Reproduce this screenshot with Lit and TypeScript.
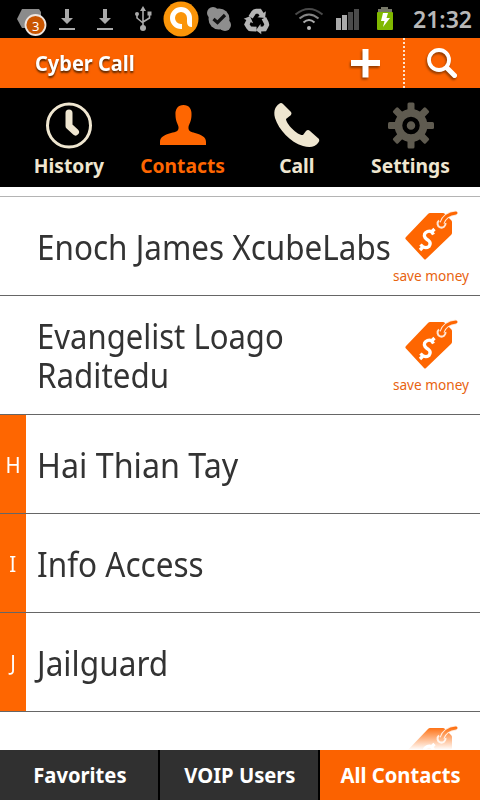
import { LitElement, html, css, svg, nothing } from "lit";
import { customElement } from "lit/decorators.js";
import { classMap } from "lit/directives/class-map.js";
import { styleMap } from "lit/directives/style-map.js";

interface Line {
  text: string;
  stretch: number;
}

interface Row {
  lines: Line[];
  letter?: string;
  save?: boolean;
}

const rows: Row[] = [
  { lines: [{ text: "Enoch James XcubeLabs", stretch: 0.925 }], save: true },
  {
    lines: [
      { text: "Evangelist Loago", stretch: 0.913 },
      { text: "Raditedu", stretch: 0.922 },
    ],
    save: true,
  },
  { lines: [{ text: "Hai Thian Tay", stretch: 0.949 }], letter: "H" },
  { lines: [{ text: "Info Access", stretch: 0.927 }], letter: "I" },
  { lines: [{ text: "Jailguard", stretch: 0.93 }], letter: "J" },
];

const tag = html`<svg width="56" height="52" viewBox="0 0 56 52">
  <path d="M27 4H40Q41 4 42 5L48 11Q49 12 49 13V24Q49 25 48 26L23 50Q22 51 21 50L2.500 30Q2 29 3 28L25 5Q26 4 27 4Z" fill="#fe6601" />
  <path d="M36 11.500A4 4 0 1 0 42.500 14" fill="none" stroke="#ffe6d4" stroke-width="2" />
  <path d="M39 14Q42 5 53 4" fill="none" stroke="#ffe6d4" stroke-width="5" />
  <path d="M39 14Q42 5 53 4" fill="none" stroke="#fe6601" stroke-width="3" stroke-linecap="round" />
  <path d="M30.500 25.500Q28 21 24.500 22.500Q20 24.500 22 28.500Q23 30 25.500 31.500Q28.500 34 26 37.500Q22 40.500 17.500 35.500M28 23.500L31.500 20M20 38L17 41" fill="none" stroke="#fff" stroke-width="3.300" />
</svg>`;

const teeth = [0, 45, 90, 135, 180, 225, 270, 315];

const icons = {
  history: html`<svg width="50" height="50" viewBox="0 0 50 50">
    <circle cx="25" cy="25.500" r="21.500" fill="none" stroke="#efe6d0" stroke-width="3" />
    <path d="M25 13V26L31.500 32" fill="none" stroke="#efe6d0" stroke-width="7" stroke-linecap="round" stroke-linejoin="round" />
  </svg>`,
  contacts: html`<svg width="50" height="50" viewBox="0 0 50 50">
    <path d="M25.500 5C31 5 34 9 33.500 15C33.500 21 31 24 30.500 27C30 31 33 32 37 33C44 35 48 37 48 42V45H2V42C2 37 6 35 13 33C18 32 21 31 20.500 27C20 24 17.500 21 17.500 15C17 9 20 5 25.500 5Z" fill="#fe6601" />
  </svg>`,
  call: html`<svg width="50" height="50" viewBox="0 0 50 50">
    <path d="M7 4Q9 2 11 4L19 12Q20 13 19 15L14 19C14 24 26 36 31 35L34 31Q36 29 38 31L47 39Q48 41 46 43C43 47 38 48 31 46C18 42 7 30 3 18C1 10 4 6 7 4Z" fill="#efe6d0" />
  </svg>`,
  settings: html`<svg width="50" height="50" viewBox="0 0 50 50">
    ${teeth.map((a) => svg`<rect x="21.500" y="2.500" width="7" height="12" rx="1.500" fill="#5f5b50" transform="rotate(${a} 25 25.500)" />`)}
    <circle cx="25" cy="25.500" r="16.500" fill="#5f5b50" />
    <circle cx="25" cy="25.500" r="6.500" fill="#5f5b50" stroke="#000" stroke-width="4.500" />
  </svg>`,
};

const recycleArms = [0, 120, 240];

const statusBar = html`<svg width="480" height="38" viewBox="0 0 480 38">
  <path d="M22 9H39L41 12V28H22L17 19Z" fill="#8b8b8b" />
  <circle cx="35.500" cy="25" r="10" fill="#c95500" stroke="#eee5df" stroke-width="1.800" />
  <text x="35.700" y="30.500" class="badge">3</text>
  <g fill="#aaa">
    <path d="M65 9H69V18H73L67 24L61 18H65ZM59 28H75V30H59Z" />
    <path d="M103 9H107V18H111L105 24L99 18H103ZM97 28H113V30H97Z" />
    <circle cx="143" cy="28" r="3" />
    <path d="M143 6L146 11H140Z" />
    <circle cx="137" cy="14" r="2" />
    <rect x="147.500" y="11.500" width="4" height="4" />
  </g>
  <path d="M143 10V27M137 14V18L143 23M149.500 14V18L143 22" fill="none" stroke="#aaa" stroke-width="1.600" />
  <circle cx="181" cy="19" r="17.500" fill="#fb9509" />
  <path d="M182 26.500H181A8.500 8.500 0 1 1 189.500 18V22Q189.500 24.500 192 24.500" fill="none" stroke="#fff" stroke-width="5" />
  <circle cx="219" cy="19" r="10.500" fill="#8e8e8e" />
  <circle cx="213" cy="13" r="6" fill="#8e8e8e" />
  <circle cx="225" cy="25" r="6" fill="#8e8e8e" />
  <path d="M213.500 19L217.500 22.500L225 15" fill="none" stroke="#111" stroke-width="3.200" />
  <g transform="translate(257 21.500) scale(0.85) translate(-257 -21.500)">
    ${recycleArms.map(
      (a) => svg`<g transform="rotate(${a} 257 21.500)">
        <path d="M249.500 16.500L253 11Q254 9.500 256 9.500H260L263 14" fill="none" stroke="#b5b5b5" stroke-width="5.800" />
        <path d="M257.500 16.500L266.500 17.500L267.500 9.500Z" fill="#b5b5b5" />
      </g>`
    )}
  </g>
  <g fill="none" stroke-width="2">
    <path d="M295.500 14.500Q309 3.500 322.500 14.500" stroke="#4a4a4a" />
    <path d="M299.500 18.500Q309 10.500 318.500 18.500" stroke="#858585" />
    <path d="M303.500 22.500Q309 17.500 314.500 22.500" stroke="#aaa" />
  </g>
  <circle cx="309" cy="28" r="2" fill="#bbb" />
  <rect x="336" y="18" width="5" height="12" fill="#aaa" />
  <rect x="342" y="15" width="5" height="15" fill="#aaa" />
  <rect x="348" y="12" width="5" height="18" fill="#4b4b4b" />
  <rect x="354" y="9" width="5" height="21" fill="#4b4b4b" />
  <path d="M381 7H388V9H392V12H378V9H381Z" fill="#777868" />
  <rect x="377" y="12" width="16" height="18" rx="1" fill="#80b800" />
  <path d="M383 13H388L386.500 18H390L383 27L384.500 21H381Z" fill="#fff" />
  <text x="413" y="28" class="clock" textLength="59" lengthAdjust="spacingAndGlyphs">21:32</text>
</svg>`;

@customElement("app-root")
export class AppRoot extends LitElement {
  static styles = css`
    :host {
      display: flex;
      flex-direction: column;
      width: 480px;
      height: 800px;
      overflow: hidden;
      background: #fff;
      font-family: "Noto Sans", sans-serif;
      color: #333;
    }
    svg { display: block; flex: none; }
    .status { height: 38px; background: #000; flex: none; }
    .clock { font-size: 24px; font-weight: 600; fill: #b8b8b8; }
    .badge { font-size: 13px; fill: #fff; text-anchor: middle; }
    .header {
      height: 50px;
      flex: none;
      display: flex;
      align-items: center;
      background: #fb6200;
      color: #fff;
    }
    .fit { display: inline-block; white-space: nowrap; transform: scaleX(0.93); }
    .title {
      flex: 1;
      padding-left: 35px;
      font-size: 20.500px;
      font-weight: 700;
      text-shadow: 0 2px 2px #5a2800;
    }
    .title .fit { transform-origin: left; transform: scaleX(0.975); }
    .tools { filter: drop-shadow(-1px 2px 1px rgba(80, 35, 0, 0.6)); }
    .nav {
      height: 99px;
      flex: none;
      box-sizing: border-box;
      display: flex;
      padding: 12px 12px 0;
      background: #000;
    }
    .tab {
      width: 114px;
      display: flex;
      flex-direction: column;
      align-items: center;
      color: #efe6d0;
      font-size: 20px;
      font-weight: 700;
      line-height: 32px;
    }
    .tab .fit { transform: translateX(-0.5px) scaleX(0.963); }
    .tab.active { color: #fe6601; }
    .list { flex: 1; padding-top: 9px; overflow: hidden; position: relative; }
    .row {
      display: flex;
      box-sizing: border-box;
      height: 99px;
      border-bottom: 1px solid #666;
    }
    .row.first { height: 100px; border-top: 1px solid #b4b4b4; }
    .row.tall { height: 119px; }
    .row.last { border-bottom: 0; }
    .letter {
      width: 26px;
      display: flex;
      align-items: center;
      justify-content: center;
      color: #fff;
      font-size: 22px;
    }
    .letter.filled { background: #fe6601; }
    .name {
      flex: 1;
      min-width: 0;
      display: flex;
      flex-direction: column;
      justify-content: center;
      align-items: flex-start;
      padding: 3px 0 0 11px;
      font-size: 34px;
      line-height: 39px;
    }
    .tall .name { padding-top: 1px; }
    .name .fit { transform-origin: left; }
    .save {
      width: 98px;
      display: flex;
      flex-direction: column;
      align-items: center;
      padding-top: 12px;
      color: #e8630f;
      font-size: 14.500px;
      line-height: 20px;
    }
    .tall .save { padding-top: 22px; }
    .save .fit { margin-top: 4px; transform: translateX(-0.5px) scaleX(0.94); }
    .fade {
      position: absolute;
      left: 0;
      right: 0;
      bottom: 0;
      height: 24px;
      background: linear-gradient(rgba(255, 255, 255, 0), #fff);
    }
    .bottom { height: 50px; flex: none; display: flex; gap: 2px; background: #000; }
    .segment {
      width: 158px;
      display: flex;
      align-items: center;
      justify-content: center;
      background: #303030;
      color: #fff;
      font-size: 20.500px;
      font-weight: 700;
    }
    .segment .fit { transform: translateX(0.5px) scaleX(0.985); }
    .segment.active { width: 160px; background: #fb6200; }
  `;

  private tab(label: string, icon: unknown, active = false) {
    return html`<div class=${classMap({ tab: true, active })}>${icon}<span class="fit">${label}</span></div>`;
  }

  private row(r: Row, i: number) {
    const cls = { row: true, first: i === 0, tall: r.lines.length > 1 };
    return html`<div class=${classMap(cls)}>
      <div class=${classMap({ letter: true, filled: !!r.letter })}><span class="fit">${r.letter ?? nothing}</span></div>
      <div class="name">
        ${r.lines.map((l) => html`<span class="fit" style=${styleMap({ transform: `scaleX(${l.stretch})` })}>${l.text}</span>`)}
      </div>
      ${r.save ? html`<div class="save">${tag}<span class="fit">save money</span></div>` : nothing}
    </div>`;
  }

  render() {
    return html`
      <div class="status">${statusBar}</div>
      <div class="header">
        <div class="title"><span class="fit">Cyber Call</span></div>
        <svg class="tools" width="56" height="50" viewBox="0 0 56 50">
          <path d="M15.500 11H21.500V22H33V28H21.500V39.500H15.500V28H4V22H15.500Z" fill="#fff" />
        </svg>
        <svg width="2" height="50"><path d="M1 0V50" stroke="#ffe3cd" stroke-width="2" stroke-dasharray="2 2" /></svg>
        <svg class="tools" width="75" height="50" viewBox="0 0 75 50">
          <circle cx="34" cy="22" r="10" fill="none" stroke="#fff" stroke-width="3.800" />
          <path d="M42 30L49.500 37.500" stroke="#fff" stroke-width="5" stroke-linecap="round" />
        </svg>
      </div>
      <div class="nav">
        ${this.tab("History", icons.history)} ${this.tab("Contacts", icons.contacts, true)}
        ${this.tab("Call", icons.call)} ${this.tab("Settings", icons.settings)}
      </div>
      <div class="list">
        ${rows.map((r, i) => this.row(r, i))}
        <div class="row last">
          <div class="letter"></div>
          <div class="name"></div>
          <div class="save">${tag}</div>
        </div>
        <div class="fade"></div>
      </div>
      <div class="bottom">
        <div class="segment"><span class="fit">Favorites</span></div>
        <div class="segment"><span class="fit">VOIP Users</span></div>
        <div class="segment active"><span class="fit">All Contacts</span></div>
      </div>
    `;
  }
}
